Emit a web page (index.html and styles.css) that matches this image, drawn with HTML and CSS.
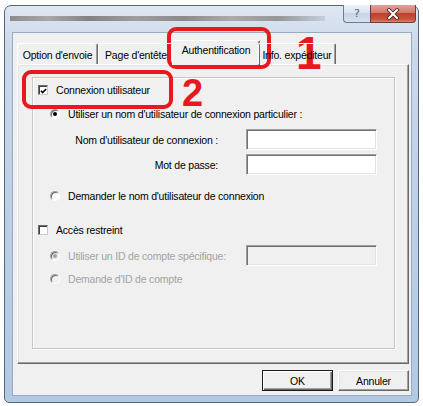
FILE: index.html
```html
<!DOCTYPE html>
<html lang="fr">
<head>
<meta charset="utf-8">
<title>Propriétés</title>
<link rel="stylesheet" href="styles.css">
</head>
<body>
<div class="window">
  <div class="titlebar">
    <div class="caption-btns">
      <div class="cbtn help">?</div>
      <div class="cbtn close">
        <svg width="14" height="12" viewBox="0 0 14 12"><path d="M3 2 L11 10 M11 2 L3 10" stroke="#3a1f1f" stroke-width="3.6" stroke-linecap="square"/><path d="M3 2 L11 10 M11 2 L3 10" stroke="#fff" stroke-width="2" stroke-linecap="square"/></svg>
      </div>
    </div>
  </div>
  <div class="client">
    <div class="tabs">
      <div class="tab t1">Option d'envoie</div>
      <div class="tab t2">Page d'entête</div>
      <div class="tab t3 active">Authentification</div>
      <div class="tab t4">Info. expéditeur</div>
    </div>
    <div class="panel">
      <div class="group">
        <div class="row check-row r1"><span class="cb checked"><svg width="8" height="8" viewBox="0 0 8 8"><path d="M1 3.8 L3 5.8 L7 1.6" fill="none" stroke="#000" stroke-width="1.7"/></svg></span>Connexion utilisateur</div>
        <div class="row radio-row r2"><span class="rb on"></span>Utiliser un nom d'utilisateur de connexion particulier :</div>
        <div class="form-row f1"><span class="lbl">Nom d'utilisateur de connexion :</span><span class="input"></span></div>
        <div class="form-row f2"><span class="lbl">Mot de passe:</span><span class="input"></span></div>
        <div class="row radio-row r3"><span class="rb"></span>Demander le nom d'utilisateur de connexion</div>
        <div class="row check-row r4"><span class="cb"></span>Accès restreint</div>
        <div class="form-row disabled f3"><span class="radio-in"><span class="rb on"></span>Utiliser un ID de compte spécifique:</span><span class="input"></span></div>
        <div class="row radio-row disabled r5"><span class="rb"></span>Demande d'ID de compte</div>
      </div>
    </div>
    <div class="buttons">
      <div class="btn default">OK</div>
      <div class="btn">Annuler</div>
    </div>
  </div>
</div>
<div class="mark box1"></div>
<div class="mark num num1">1</div>
<div class="mark box2"></div>
<div class="mark num num2">2</div>
</body>
</html>
```
FILE: styles.css
```css
* { box-sizing: border-box; }
html, body { margin: 0; padding: 0; background: #fff; }
body {
  position: relative;
  width: 423px;
  height: 406px;
  overflow: hidden;
  font-family: "Liberation Sans", Arial, sans-serif;
  font-size: 10.5px;
  letter-spacing: -0.2px;
  color: #000;
}

.window {
  margin: 5px 0 0 4px;
  width: 415px;
  height: 398px;
  border: 1px solid #56677d;
  border-radius: 7px 7px 5px 5px;
  background: linear-gradient(#dfe7f1, #cbd9ea 10%, #bccfe6 55%, #b3c8e2);
  padding: 0 6px 6px 7px;
  display: flex;
  flex-direction: column;
}

.titlebar {
  flex: none;
  height: 26px;
  display: flex;
  justify-content: flex-end;
  margin: 0 -4px 0 -2px;
  background-image: linear-gradient(90deg, #8c8c8c, #a8a8a8 12%, #828282 25%, #9e9e9e 40%, #8a8a8a 55%, #ababab 70%, #969696 85%, #c4cfdd);
  background-repeat: no-repeat;
  background-position: 0 10px;
  background-size: 315px 5px;
}
.caption-btns {
  display: flex;
  margin-top: -1px;
  height: 18px;
}
.cbtn {
  height: 18px;
  border: 1px solid #6b7d93;
  border-top: none;
  display: flex;
  align-items: center;
  justify-content: center;
}
.help {
  width: 27px;
  border-radius: 0 0 0 4px;
  border-right: none;
  background: linear-gradient(#eef3f9, #d9e3ef 45%, #c6d4e6 50%, #d5e1ef);
  color: #4f6480;
  font-family: "DejaVu Sans", sans-serif;
  font-size: 11px;
  letter-spacing: 0;
}
.close {
  width: 46px;
  border-radius: 0 0 4px 0;
  background: linear-gradient(#e3a298, #d07a6c 45%, #bf3f2c 50%, #c9553f 85%, #d9876a);
  border-color: #6e3a36;
}

.client {
  flex: 1;
  min-height: 0;
  border: 1px solid #97abc3;
  background: #f0f0f0;
  padding: 7px 2px 4px 4px;
  display: flex;
  flex-direction: column;
}

.tabs {
  flex: none;
  height: 24px;
  display: flex;
  align-items: flex-end;
  position: relative;
  z-index: 1;
}
.tab {
  height: 21px;
  border: 1px solid #fff;
  border-bottom: none;
  border-right-color: #696969;
  border-radius: 2px 2px 0 0;
  box-shadow: inset -1px 0 0 #a0a0a0;
  display: flex;
  align-items: center;
  justify-content: center;
  padding-top: 1px;
  white-space: nowrap;
}
.t1 { width: 81px; }
.t2 { width: 76px; }
.t3 { width: 88px; }
.t4 { width: 78px; }
.tab.active {
  height: 25px;
  margin: 0 -2px -1px -2px;
  background: #f0f0f0;
  padding-top: 0;
  padding-bottom: 6px;
}

.panel {
  flex: none;
  height: 300px;
  border: 1px solid;
  border-color: #fff #696969 #696969 #fff;
  box-shadow: inset -1px -1px 0 #a0a0a0, inset 1px 1px 0 #e3e3e3;
  padding: 12px 13px 14px 14px;
  display: flex;
}
.group {
  flex: 1;
  border: 1px solid #c6c6c6;
  box-shadow: inset 1px 1px 0 #fff, 1px 1px 0 #fff;
  padding-top: 5px;
  display: flex;
  flex-direction: column;
}

.row {
  height: 14px;
  display: flex;
  align-items: center;
  white-space: nowrap;
}
.check-row { padding-left: 5px; gap: 8px; }
.radio-row { padding-left: 17px; gap: 8px; }
.r2 { margin-top: 10px; }
.f1 { margin-top: 8px; }
.f2 { margin-top: 4px; }
.r3 { margin-top: 14px; }
.r4 { margin-top: 20px; }
.f3 { margin-top: 8px; }
.r5 { margin-top: 6px; }

.form-row {
  height: 21px;
  display: grid;
  grid-template-columns: 185px 131px;
  column-gap: 28px;
  align-items: center;
  white-space: nowrap;
}
.lbl { text-align: right; }
.radio-in {
  display: flex;
  align-items: center;
  gap: 8px;
  padding-left: 17px;
}

.input {
  height: 21px;
  border: 1px solid;
  border-color: #a0a0a0 #fff #fff #a0a0a0;
  box-shadow: inset 1px 1px 0 #707070, inset -1px -1px 0 #e3e3e3;
  background: #fff;
}

.cb {
  width: 10px;
  height: 10px;
  flex: none;
  border: 1px solid;
  border-color: #6d6d6d #c9c9c9 #c9c9c9 #6d6d6d;
  box-shadow: inset 1px 1px 0 #404040;
  background: #fff;
  display: flex;
  align-items: center;
  justify-content: center;
}
.cb svg { margin: 1px 0 0 1px; }

.rb {
  width: 10px;
  height: 10px;
  flex: none;
  border-radius: 50%;
  border: 1px solid;
  border-color: #a0a0a0 #fff #fff #a0a0a0;
  box-shadow: inset 1px 1px 0 #6a6a6a;
  background: #fff;
  display: flex;
  align-items: center;
  justify-content: center;
}
.rb.on::after {
  content: "";
  width: 4px;
  height: 4px;
  border-radius: 50%;
  background: #000;
}

.disabled { color: #a3a3a3; }
.disabled .rb { background: #f0f0f0; }
.disabled .rb.on::after { background: #a0a0a0; }
.disabled .input { background: #f0f0f0; }

.buttons {
  flex: none;
  margin-top: 6px;
  height: 21px;
  display: flex;
  justify-content: flex-end;
  gap: 5px;
}
.btn {
  width: 71px;
  height: 21px;
  border: 1px solid;
  border-color: #fff #696969 #696969 #fff;
  box-shadow: inset -1px -1px 0 #a0a0a0, inset 1px 1px 0 #e3e3e3;
  background: #f0f0f0;
  display: flex;
  align-items: center;
  justify-content: center;
}
.btn.default {
  border-color: #1a1a1a;
  box-shadow: inset 1px 1px 0 #fff, inset -1px -1px 0 #696969, inset -2px -2px 0 #a0a0a0;
}

.mark { position: absolute; }
.box1, .box2 {
  border: 4px solid #e8181e;
  border-radius: 9px;
}
.box1 { left: 167px; top: 27px; width: 104px; height: 42px; }
.box2 { left: 22px; top: 70px; width: 151px; height: 39px; }
.num {
  color: #e8181e;
  font-weight: bold;
  letter-spacing: 0;
}
.num1 { left: 296px; top: 37px; font-size: 46px; line-height: 33px; }
.num2 { left: 182px; top: 80px; font-size: 38px; line-height: 27px; }
```
